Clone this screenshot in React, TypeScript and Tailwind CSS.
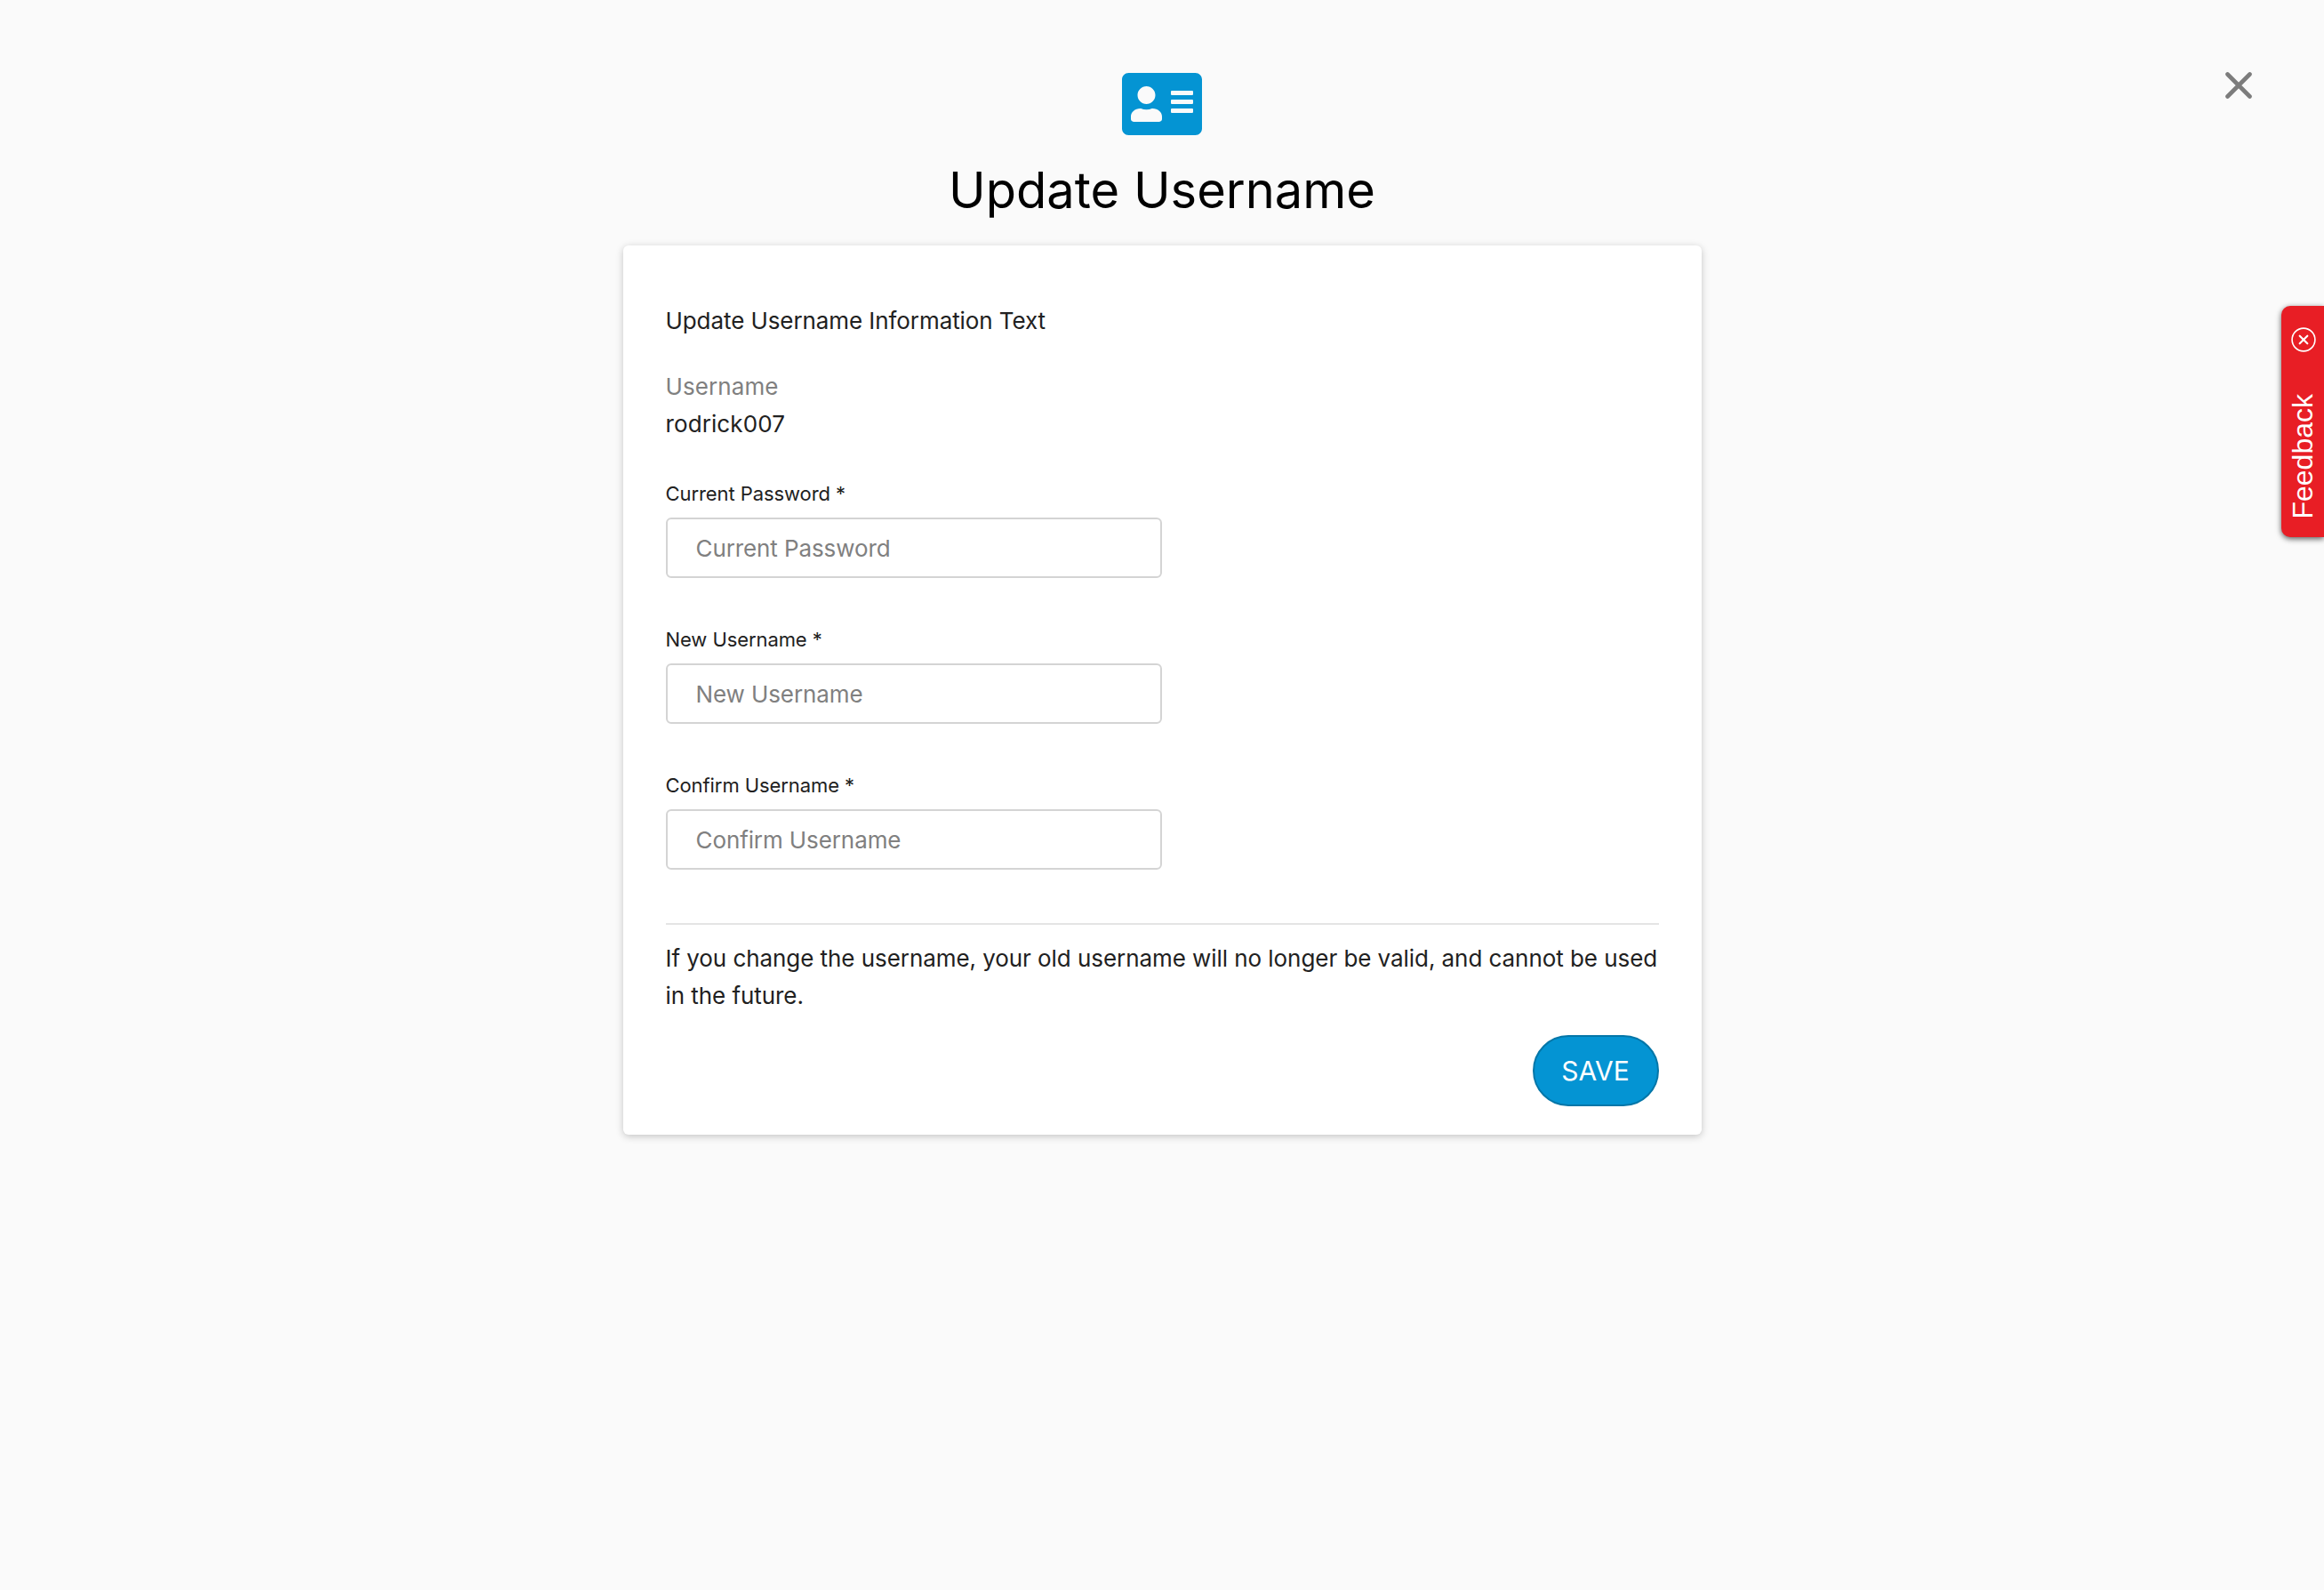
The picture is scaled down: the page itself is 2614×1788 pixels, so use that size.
import React, { useState } from 'react'
import { FaAddressCard } from 'react-icons/fa'

interface FieldProps {
  id: string
  label: string
  type?: string
}

const Field: React.FC<FieldProps> = ({ id, label, type = 'text' }) => {
  const [value, setValue] = useState('')

  return (
    <div className="flex flex-col w-1/2">
      <label htmlFor={id} className="mb-[11px] text-[22px] leading-8 tracking-[-0.08px]">
        {label} *
      </label>
      <input
        id={id}
        type={type}
        value={value}
        placeholder={label}
        onChange={e => setValue(e.target.value)}
        className="h-[68px] px-8 border-2 border-[#d4d4d4] rounded-md text-[26px] tracking-[-0.1px] placeholder:text-[#808080] outline-none"
      />
    </div>
  )
}

const FeedbackTab: React.FC = () => (
  <div className="absolute right-0 top-[344px] w-12 h-[260px] pt-[24px] pl-px flex flex-col items-center rounded-l-[10px] bg-[#e81e25] text-white shadow-[0_2px_6px_rgba(0,0,0,0.65)]">
    <svg className="w-7 h-7 shrink-0" viewBox="0 0 28 28" fill="none" stroke="currentColor" strokeLinecap="round">
      <circle cx="14" cy="14" r="12.9" strokeWidth="1.6" />
      <path d="M9.7 9.7l8.6 8.6M18.3 9.7l-8.6 8.6" strokeWidth="2.2" />
    </svg>
    <span className="mt-[47px] mr-[2px] rotate-180 [writing-mode:vertical-rl] font-['Liberation_Sans',sans-serif] text-[32px] leading-[48px]">
      Feedback
    </span>
  </div>
)

const App: React.FC = () => {
  return (
    <div className="relative min-h-[1788px] overflow-hidden bg-[#fafafa] font-['Inter',sans-serif] text-[#212121]">
      {/* Close */}
      <button aria-label="Close" className="absolute right-[81px] top-[81px] text-[#7c7c7c]">
        <svg className="w-[30px] h-[30px]" viewBox="0 0 30 30" fill="none" stroke="currentColor" strokeWidth="4.6" strokeLinecap="round">
          <path d="M2.5 2.5l25 25M27.5 2.5l-25 25" />
        </svg>
      </button>

      <main className="w-[1213px] mx-auto pt-[77px]">
        <header className="flex flex-col items-center mb-[26px]">
          <FaAddressCard className="w-[90px] h-20 text-[#0494d3]" />
          <h1 className="mt-[21px] text-[56px] leading-[72px] text-black">Update Username</h1>
        </header>

        <form
          onSubmit={e => e.preventDefault()}
          className="px-12 pt-16 pb-8 rounded-md bg-white shadow-[0_2px_8px_rgba(0,0,0,0.22)] text-[26px] leading-[42px]"
        >
          <p className="tracking-[-0.08px]">Update Username Information Text</p>

          <div className="mt-8 mb-[41px]">
            <p className="text-[#808080] tracking-[0.1px]">Username</p>
            <p className="tracking-[0.1px]">rodrick007</p>
          </div>

          <div className="flex flex-col gap-[53px]">
            <Field id="current-password" label="Current Password" type="password" />
            <Field id="new-username" label="New Username" />
            <Field id="confirm-username" label="Confirm Username" />
          </div>

          <p className="mt-[60px] pt-[17px] border-t-2 border-[#e4e4e4] tracking-[-0.06px]">
            If you change the username, your old username will no longer be valid, and cannot be used in the future.
          </p>

          <div className="flex justify-end mt-[23px]">
            <button
              type="submit"
              className="w-[142px] h-20 rounded-full border-2 border-[#0476a8] bg-[#0494d3] text-[30px] text-white"
            >
              SAVE
            </button>
          </div>
        </form>
      </main>

      <FeedbackTab />
    </div>
  )
}

export default App
